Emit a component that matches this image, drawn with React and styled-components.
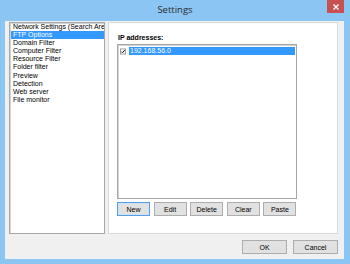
import React, { useState } from 'react';
import styled, { createGlobalStyle } from 'styled-components';

const Global = createGlobalStyle`
  html, body { margin: 0; padding: 0; background: #fff; }
  body { font-family: "Liberation Sans", Arial, sans-serif; }
`;

const pages = [
  'Network Settings (Search Area)',
  'FTP Options',
  'Domain Filter',
  'Computer Filter',
  'Resource Filter',
  'Folder filter',
  'Preview',
  'Detection',
  'Web server',
  'File monitor',
];

const Window = styled.div`
  width: 350px;
  height: 264px;
  box-sizing: border-box;
  background: #8ac5f4;
  padding: 0 6px 5px 5px;
  display: flex;
  flex-direction: column;
`;

const TitleBar = styled.div`
  height: 21px;
  flex: none;
  display: flex;
  align-items: center;
  justify-content: center;
  position: relative;
  font-family: "Open Sans", "Noto Sans", sans-serif;
  font-size: 9.5px;
  color: #2b2b2b;
  margin: 0 -6px 0 -5px;
  padding-bottom: 2px;
  box-sizing: border-box;
`;

const CloseButton = styled.div`
  position: absolute;
  top: 0;
  right: 6px;
  width: 17px;
  height: 13px;
  background: #c75050;
  display: flex;
  align-items: center;
  justify-content: center;
`;

const Client = styled.div`
  flex: 1;
  background: #f0f0f0;
  display: flex;
  flex-direction: column;
  padding: 1px 6px 4px 4px;
  font-size: 7px;
  color: #000;
`;

const Main = styled.div`
  display: flex;
  gap: 3px;
  height: 212px;
`;

const ListBox = styled.div`
  box-sizing: border-box;
  background: #fff;
  border: 1px solid #a6a6a6;
  box-shadow: inset 1px 1px 0 #d4d4d4;
  overflow: hidden;
  width: ${(p) => p.w}px;
  height: ${(p) => p.h}px;
  padding: ${(p) => p.pad || 0}px;
`;

const Item = styled.div`
  height: 8.1px;
  line-height: 8.1px;
  white-space: nowrap;
  padding-left: 2px;
  margin-left: 1px;
  background: ${(p) => (p.selected ? '#3399ff' : 'transparent')};
  color: ${(p) => (p.selected ? '#fff' : '#000')};
`;

const Panel = styled.div`
  flex: 1;
  box-sizing: border-box;
  background: #fff;
  border: 1px solid #d9d9d9;
  padding: 10px 8px 0 8px;
  display: flex;
  flex-direction: column;
`;

const Label = styled.div`
  font-weight: bold;
  height: 11px;
  line-height: 9px;
  padding-left: 1px;
`;

const IpRow = styled.div`
  display: flex;
  align-items: center;
  height: 8px;
  margin-top: 1px;
`;

const Check = styled.div`
  width: 6px;
  height: 6px;
  margin: 0 3px 0 1px;
  display: flex;
  align-items: center;
  justify-content: center;
`;

const Selected = styled.div`
  flex: 1;
  height: 8px;
  line-height: 8px;
  background: #3399ff;
  color: #fff;
  padding-left: 1px;
`;

const ButtonRow = styled.div`
  display: flex;
  gap: ${(p) => p.gap}px;
  margin-top: ${(p) => p.top}px;
  justify-content: ${(p) => p.justify || 'flex-start'};
`;

const Button = styled.div`
  box-sizing: border-box;
  width: ${(p) => p.w}px;
  height: 14px;
  background: #e1e1e1;
  border: 1px solid ${(p) => (p.focus ? '#569de5' : '#adadad')};
  box-shadow: ${(p) => (p.focus ? 'inset 0 0 0 1px #cfe3f7' : 'none')};
  display: flex;
  align-items: center;
  justify-content: center;
  font-size: 7px;
  color: #000;
`;

const CheckMark = () => (
  <svg width="7" height="7" viewBox="0 0 7 7">
    <rect x="0.5" y="0.5" width="6" height="6" fill="#fff" stroke="#8f8f8f" strokeWidth="1" />
    <path d="M1.5 3.6 L2.9 5 L5.6 1.8" fill="none" stroke="#000" strokeWidth="1.1" />
  </svg>
);

export default function App() {
  const [current, setCurrent] = useState(1);
  return (
    <>
      <Global />
      <Window>
        <TitleBar>
          Settings
          <CloseButton>
            <svg width="6" height="6" viewBox="0 0 6 6">
              <path d="M0.5 0.5 L5.5 5.5 M5.5 0.5 L0.5 5.5" stroke="#fff" strokeWidth="1.4" />
            </svg>
          </CloseButton>
        </TitleBar>
        <Client>
          <Main>
            <ListBox w={96} h={212}>
              {pages.map((p, i) => (
                <Item key={p} selected={i === current} onClick={() => setCurrent(i)}>
                  {p}
                </Item>
              ))}
            </ListBox>
            <Panel>
              <Label>IP addresses:</Label>
              <ListBox w={180} h={155} pad={1}>
                <IpRow>
                  <Check>
                    <CheckMark />
                  </Check>
                  <Selected>192.168.56.0</Selected>
                </IpRow>
              </ListBox>
              <ButtonRow gap={3.6} top={3}>
                <Button w={33} focus>New</Button>
                <Button w={33}>Edit</Button>
                <Button w={33}>Delete</Button>
                <Button w={33}>Clear</Button>
                <Button w={33}>Paste</Button>
              </ButtonRow>
            </Panel>
          </Main>
          <ButtonRow gap={6} top={6} justify="flex-end">
            <Button w={45}>OK</Button>
            <Button w={45}>Cancel</Button>
          </ButtonRow>
        </Client>
      </Window>
    </>
  );
}
